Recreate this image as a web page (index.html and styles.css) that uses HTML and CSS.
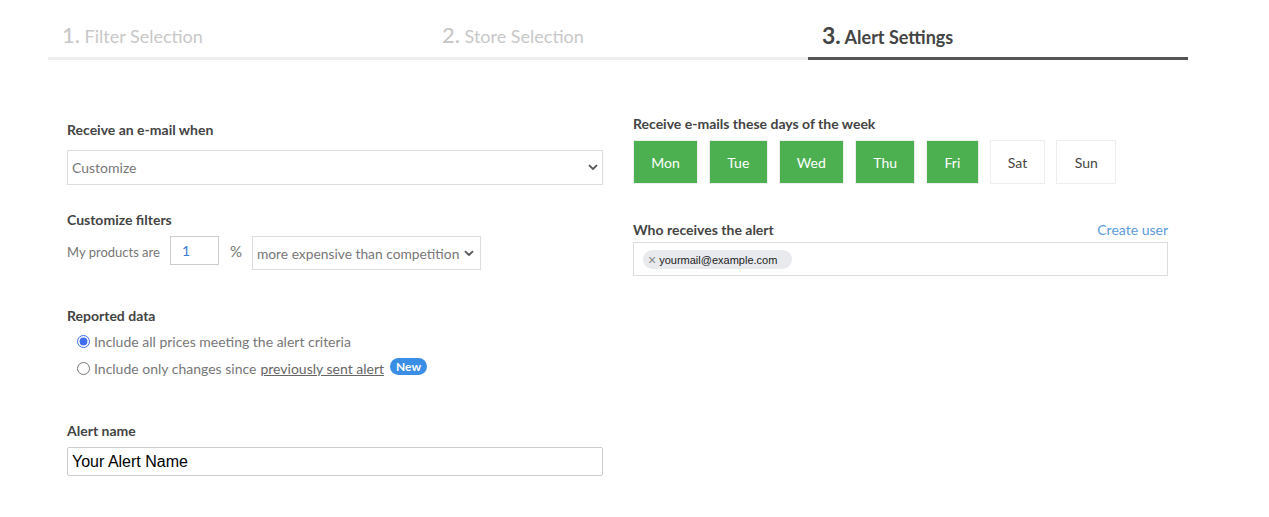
FILE: index.html
```html
<!DOCTYPE html>
<html lang="en">
<head>
    <meta charset="UTF-8">
    <meta name="viewport" content="width=device-width, initial-scale=1.0">
    <title>Alert Settings</title>
    <link rel="stylesheet" href="styles.css">
</head>
<body>
    <div class="wizard">
        <div class="steps">
            <div class="step"><span class="step-num">1.</span> Filter Selection</div>
            <div class="step"><span class="step-num">2.</span> Store Selection</div>
            <div class="step active"><span class="step-num">3.</span> Alert Settings</div>
        </div>

        <div class="settings">
            <div class="col">
                <div class="field first">
                    <div class="label">Receive an e-mail when</div>
                    <div class="select-wrap block">
                        <select class="select full">
                            <option>Customize</option>
                        </select>
                        <svg class="chevron" width="10" height="7" viewBox="0 0 10 7"><path d="M1 1.2 L5 5 L9 1.2" fill="none" stroke="#555" stroke-width="1.8"/></svg>
                    </div>
                </div>

                <div class="field filters">
                    <div class="label">Customize filters</div>
                    <div class="filter-row">
                        <span class="muted">My products are</span>
                        <input class="pct" type="text" value="1">
                        <span class="pct-sign">%</span>
                        <div class="select-wrap">
                            <select class="select compare">
                                <option>more expensive than competition</option>
                            </select>
                            <svg class="chevron" width="10" height="7" viewBox="0 0 10 7"><path d="M1 1.2 L5 5 L9 1.2" fill="none" stroke="#555" stroke-width="1.8"/></svg>
                        </div>
                    </div>
                </div>

                <div class="field reported">
                    <div class="label">Reported data</div>
                    <label class="radio"><input type="radio" name="data" checked> Include all prices meeting the alert criteria</label>
                    <label class="radio"><input type="radio" name="data"> Include only changes since <a href="#" class="ul">previously sent alert</a> <span class="badge">New</span></label>
                </div>

                <div class="field name">
                    <div class="label">Alert name</div>
                    <input class="name-input" type="text" value="Your Alert Name">
                </div>
            </div>

            <div class="col">
                <div class="field">
                    <div class="label">Receive e-mails these days of the week</div>
                    <div class="days">
                        <button class="day on">Mon</button>
                        <button class="day on">Tue</button>
                        <button class="day on">Wed</button>
                        <button class="day on">Thu</button>
                        <button class="day on">Fri</button>
                        <button class="day">Sat</button>
                        <button class="day">Sun</button>
                    </div>
                </div>

                <div class="field who">
                    <div class="label-row">
                        <div class="label">Who receives the alert</div>
                        <a href="#" class="link">Create user</a>
                    </div>
                    <div class="tags">
                        <span class="tag"><span class="tag-x">&times;</span>yourmail@example.com</span>
                    </div>
                </div>
            </div>
        </div>
    </div>
</body>
</html>
```

FILE: styles.css
```css
body {
    font-family: Lato, "Open Sans", Arial, sans-serif;
    margin: 0;
    padding: 0;
    color: #444;
    background: #fff;
}

.wizard {
    width: 1140px;
    margin-left: 48px;
}

.steps {
    display: flex;
    height: 60px;
}

.step {
    flex: 1;
    padding: 21px 0 0 14px;
    box-sizing: border-box;
    border-bottom: 3px solid #eee;
    color: #c8c8c8;
    font-size: 18px;
}

.step-num {
    font-size: 22px;
    font-weight: 500;
}

.step.active {
    border-bottom-color: #555;
    color: #444;
    font-weight: bold;
}

.step.active .step-num {
    font-size: 23px;
    font-weight: bold;
}

.settings {
    display: flex;
    gap: 30px;
    padding: 0 20px 0 19px;
}

.col {
    width: 536px;
}

.col + .col {
    width: 535px;
    padding-top: 55px;
}

.field.first {
    padding-top: 61px;
}

.label {
    font-size: 14px;
    font-weight: bold;
    color: #444;
    margin-bottom: 8px;
}

.select-wrap {
    position: relative;
    display: inline-block;
}

.select-wrap.block {
    display: block;
    margin-top: 12px;
}

.select {
    display: block;
    appearance: none;
    font-family: inherit;
    font-size: 14px;
    color: #777;
    background: #fff;
    border: 1px solid #ddd;
    padding: 0 16px 0 4px;
    height: 35px;
    outline: none;
}

.select.full {
    width: 536px;
}

.chevron {
    position: absolute;
    right: 5px;
    top: 14px;
}

.field.filters {
    margin-top: 26px;
}

.filter-row {
    display: flex;
    align-items: flex-start;
}

.muted {
    font-size: 13px;
    color: #777;
    margin-top: 8px;
}

.pct {
    width: 49px;
    height: 29px;
    box-sizing: border-box;
    margin-left: 10px;
    border: 1px solid #ccc;
    font-family: inherit;
    font-size: 14px;
    color: #3a7bd5;
    padding: 0 0 0 11px;
}

.pct-sign {
    font-size: 15px;
    color: #777;
    margin: 6px 10px 0 11px;
}

.select.compare {
    width: 229px;
    height: 34px;
    font-size: 13.8px;
    color: #777;
}

.select-wrap .compare + .chevron {
    right: 7px;
}

.field.reported {
    margin-top: 37px;
}

.reported .label {
    margin-bottom: 7px;
}

.radio {
    display: flex;
    align-items: center;
    font-size: 14px;
    color: #777;
    margin: 0 0 0 9px;
    height: 21px;
}

.radio + .radio {
    margin-top: 6px;
}

.radio input {
    margin: 0 4px 0 1px;
    width: 13px;
    height: 13px;
    accent-color: #3f6ff0;
}

.ul {
    color: #666;
    margin-left: 4px;
}

.badge {
    background: #3a8ee6;
    color: #fff;
    font-size: 12px;
    font-weight: bold;
    border-radius: 9px;
    padding: 1px 6px;
    margin: -4px 0 0 6px;
}

.field.name {
    margin-top: 43px;
}

.name-input {
    display: block;
    width: 536px;
    height: 29px;
    box-sizing: border-box;
    border: 1px solid #ccc;
    border-radius: 2px;
    font-family: Arial, "Liberation Sans", sans-serif;
    font-size: 16px;
    color: #000;
    padding: 0 4px;
}

.days {
    display: flex;
    gap: 11px;
}

.day {
    height: 44px;
    padding: 0 17.25px;
    border: 1px solid #eee;
    background: #fff;
    font-family: inherit;
    font-size: 14px;
    color: #444;
}

.day.on {
    background: #4caf50;
    color: #fff;
}

.field.who {
    margin-top: 37px;
}

.label-row {
    display: flex;
    justify-content: space-between;
    align-items: baseline;
}

.link {
    color: #5b9bd8;
    font-size: 14px;
    text-decoration: none;
}

.label-row .label {
    margin-bottom: 4px;
}

.tags {
    display: flex;
    align-items: flex-start;
    border: 1px solid #ddd;
    height: 34px;
    box-sizing: border-box;
    padding: 7px 9px;
}

.tag {
    display: inline-flex;
    align-items: center;
    height: 19px;
    background: #e8eaee;
    border-radius: 10px;
    padding: 0 15px 0 5px;
    font-family: Arial, "Liberation Sans", sans-serif;
    font-size: 11px;
    color: #222;
}

.tag-x {
    color: #888;
    font-size: 14px;
    margin-right: 3px;
}
```
